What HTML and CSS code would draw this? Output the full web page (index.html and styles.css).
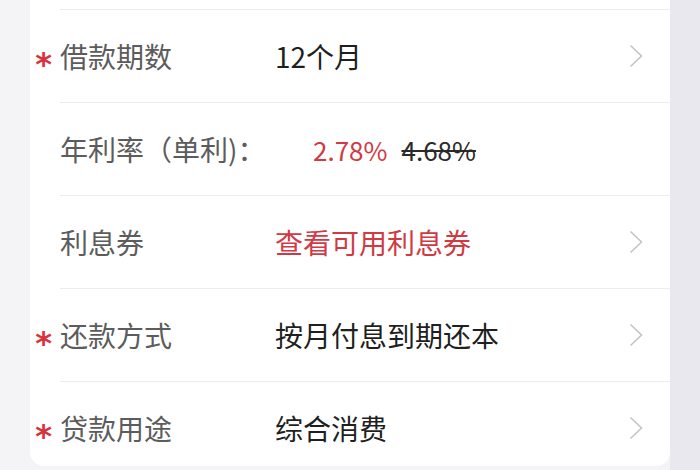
FILE: index.html
```html
<!DOCTYPE html>
<html lang="zh-CN">
<head>
<meta charset="utf-8">
<link rel="stylesheet" href="styles.css">
</head>
<body>
<div class="page">
  <div class="side side-left"></div>
  <div class="card">
    <div class="top-gap"></div>
    <div class="row">
      <div class="mark"><span class="star">*</span></div>
      <div class="main">
        <div class="label">借款期数</div>
        <div class="value">12个月</div>
        <svg class="chev" viewBox="0 0 14 24" width="14" height="24"><path d="M1.5 1.5 L12.5 12 L1.5 22.5" fill="none" stroke="#c2c2c2" stroke-width="1.5"/></svg>
      </div>
    </div>
    <div class="row">
      <div class="mark"></div>
      <div class="main">
        <div class="label">年利率（单利)：</div>
        <div class="value rate"><span class="red">2.78%</span><span class="old">4.68%</span></div>
      </div>
    </div>
    <div class="row">
      <div class="mark"></div>
      <div class="main">
        <div class="label">利息券</div>
        <div class="value red">查看可用利息券</div>
        <svg class="chev" viewBox="0 0 14 24" width="14" height="24"><path d="M1.5 1.5 L12.5 12 L1.5 22.5" fill="none" stroke="#c2c2c2" stroke-width="1.5"/></svg>
      </div>
    </div>
    <div class="row">
      <div class="mark"><span class="star">*</span></div>
      <div class="main">
        <div class="label">还款方式</div>
        <div class="value">按月付息到期还本</div>
        <svg class="chev" viewBox="0 0 14 24" width="14" height="24"><path d="M1.5 1.5 L12.5 12 L1.5 22.5" fill="none" stroke="#c2c2c2" stroke-width="1.5"/></svg>
      </div>
    </div>
    <div class="row last">
      <div class="mark"><span class="star">*</span></div>
      <div class="main">
        <div class="label">贷款用途</div>
        <div class="value">综合消费</div>
        <svg class="chev" viewBox="0 0 14 24" width="14" height="24"><path d="M1.5 1.5 L12.5 12 L1.5 22.5" fill="none" stroke="#c2c2c2" stroke-width="1.5"/></svg>
      </div>
    </div>
  </div>
  <div class="side side-right"></div>
</div>
</body>
</html>
```

FILE: styles.css
```css
html, body {
  margin: 0;
  padding: 0;
  height: 100%;
  overflow: hidden;
}
body {
  font-family: "Noto Sans CJK SC", "Noto Sans", sans-serif;
  background: #f4f4f7;
}
.page {
  display: grid;
  grid-template-columns: 30px 640px 30px;
  height: 470px;
  align-items: start;
}
.side { height: 470px; }
.side-left { background: #f4f4f7; }
.side-right { background: #e8e8ee; }
.card {
  background: #ffffff;
  border-radius: 0 0 14px 14px;
  height: 466px;
  overflow: hidden;
}
.top-gap { height: 9px; }
.row {
  display: flex;
  height: 93px;
}
.mark {
  width: 30px;
  display: flex;
  align-items: center;
  justify-content: flex-end;
  padding-right: 8px;
  box-sizing: border-box;
}
.star {
  color: #d8323c;
  font-family: "DejaVu Sans", sans-serif;
  font-size: 32px;
  font-weight: bold;
  line-height: 1;
  padding-top: 16px;
}
.main {
  flex: 1;
  display: flex;
  align-items: center;
  border-top: 1px solid #ececec;
  padding-right: 27px;
}
.label {
  width: 215px;
  flex: none;
  font-size: 28px;
  color: #5c5c5c;
  white-space: nowrap;
}
.value {
  flex: 1;
  font-size: 28px;
  color: #1f1f1f;
  white-space: nowrap;
}
.red { color: #cf3a44; }
.rate {
  padding-left: 38px;
  font-size: 26px;
  display: flex;
  gap: 14px;
}
.old {
  color: #2a2a2a;
  text-decoration: line-through;
  text-decoration-thickness: 1.5px;
}
.chev {
  flex: none;
  display: block;
}
```
